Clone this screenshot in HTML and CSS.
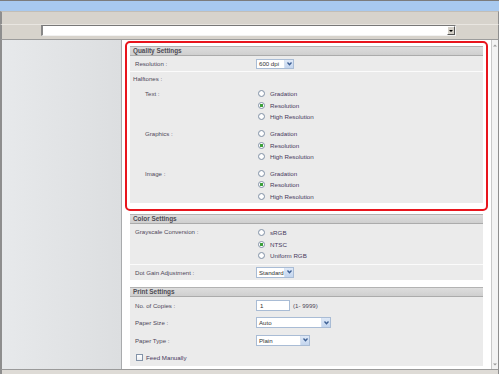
FILE: index.html
```html
<!DOCTYPE html>
<html>
<head>
<meta charset="utf-8">
<title>Settings</title>
<link rel="stylesheet" href="styles.css">
</head>
<body>
<div class="window">
  <div class="titlebar"></div>
  <div class="toolbar frame"></div>
  <div class="addrrow frame">
    <div class="combo"><span class="combo-btn"><i class="tri"></i></span></div>
  </div>
  <div class="main frame">
    <div class="sidebar"></div>
    <div class="content">
      <div class="highlight">
        <section class="panel">
          <div class="panel-head">Quality Settings</div>
          <div class="panel-body">
            <div class="row sep h16">
              <span class="label">Resolution :</span>
              <span class="select w38">600 dpi<span class="sel-btn"><svg width="7" height="6" viewBox="0 0 7 6"><polyline points="1.5,1.5 3.5,3.8 5.5,1.5" fill="none" stroke="#3d5f93" stroke-width="1.3"/></svg></span></span>
            </div>
            <div class="block">
              <div class="label title">Halftones :</div>
              <div class="group first">
                <span class="label sub">Text :</span>
                <div class="radios">
                  <div class="radio"><i class="rb"></i>Gradation</div>
                  <div class="radio"><i class="rb on"></i>Resolution</div>
                  <div class="radio"><i class="rb"></i>High Resolution</div>
                </div>
              </div>
              <div class="group">
                <span class="label sub">Graphics :</span>
                <div class="radios">
                  <div class="radio"><i class="rb"></i>Gradation</div>
                  <div class="radio"><i class="rb on"></i>Resolution</div>
                  <div class="radio"><i class="rb"></i>High Resolution</div>
                </div>
              </div>
              <div class="group">
                <span class="label sub">Image :</span>
                <div class="radios">
                  <div class="radio"><i class="rb"></i>Gradation</div>
                  <div class="radio"><i class="rb on"></i>Resolution</div>
                  <div class="radio"><i class="rb"></i>High Resolution</div>
                </div>
              </div>
            </div>
          </div>
        </section>
      </div>

      <section class="panel outer color">
        <div class="panel-head">Color Settings</div>
        <div class="panel-body">
          <div class="group gray sep">
            <span class="label">Grayscale Conversion :</span>
            <div class="radios">
              <div class="radio"><i class="rb"></i>sRGB</div>
              <div class="radio"><i class="rb on"></i>NTSC</div>
              <div class="radio"><i class="rb"></i>Uniform RGB</div>
            </div>
          </div>
          <div class="row h15">
            <span class="label">Dot Gain Adjustment :</span>
            <span class="select w38 h11">Standard<span class="sel-btn"><svg width="7" height="6" viewBox="0 0 7 6"><polyline points="1.5,1.5 3.5,3.8 5.5,1.5" fill="none" stroke="#3d5f93" stroke-width="1.3"/></svg></span></span>
          </div>
        </div>
      </section>

      <section class="panel outer print">
        <div class="panel-head">Print Settings</div>
        <div class="panel-body">
          <div class="row h17">
            <span class="label">No. of Copies :</span>
            <span class="input">1</span><span class="hint">(1- 9999)</span>
          </div>
          <div class="row h17">
            <span class="label">Paper Size :</span>
            <span class="select w75 h11">Auto<span class="sel-btn"><svg width="7" height="6" viewBox="0 0 7 6"><polyline points="1.5,1.5 3.5,3.8 5.5,1.5" fill="none" stroke="#3d5f93" stroke-width="1.3"/></svg></span></span>
          </div>
          <div class="row h17">
            <span class="label">Paper Type :</span>
            <span class="select w54 h11">Plain<span class="sel-btn"><svg width="7" height="6" viewBox="0 0 7 6"><polyline points="1.5,1.5 3.5,3.8 5.5,1.5" fill="none" stroke="#3d5f93" stroke-width="1.3"/></svg></span></span>
          </div>
          <div class="row h17 check">
            <i class="cb"></i><span class="cb-label">Feed Manually</span>
          </div>
        </div>
      </section>
    </div>
    <div class="scrollbar">
      <svg width="6" height="5" viewBox="0 0 6 5"><polygon points="1,3.5 3,1.5 5,3.5" fill="#9a9a9a"/></svg>
      <svg width="6" height="5" viewBox="0 0 6 5"><polygon points="1,1.5 3,3.5 5,1.5" fill="#9a9a9a"/></svg>
    </div>
  </div>
  <div class="bottom frame"></div>
</div>
</body>
</html>
```

FILE: styles.css
```css
* { box-sizing: border-box; margin: 0; padding: 0; }
html, body { width: 499px; height: 374px; overflow: hidden; }
body {
  font-family: "Liberation Sans", Arial, sans-serif;
  font-size: 6.1px;
  color: #4f4759;
  background: #fff;
}
.window {
  width: 499px;
  height: 374px;
  border-top: 1px solid #7c7c7c;
  display: flex;
  flex-direction: column;
}
.frame {
  border-left: 2px solid #8e8e8e;
  border-right: 1px solid #8e8e8e;
}
.titlebar { height: 10px; background: #a8c9ef; flex: none; }
.toolbar {
  height: 13px;
  flex: none;
  background: #d7d3cc;
  border-top: 1px solid #c2beb7;
}
.addrrow {
  height: 16px;
  flex: none;
  background: #d7d3cc;
  border-top: 1px solid #e9e6e1;
  border-bottom: 1px solid #9c9c9c;
}
.combo {
  margin-left: 39px;
  width: 415px;
  height: 11px;
  background: #fff;
  border-top: 1px solid #777;
  border-left: 2px solid #888;
  border-right: 1px solid #f2f2f2;
  border-bottom: 1px solid #f2f2f2;
  display: flex;
  justify-content: flex-end;
  align-items: center;
}
.combo-btn {
  width: 8px;
  height: 9px;
  background: #d4d0c8;
  border-top: 1px solid #fff;
  border-left: 1px solid #fff;
  border-right: 1px solid #555;
  border-bottom: 1px solid #555;
  display: flex;
  align-items: center;
  justify-content: center;
}
.tri {
  width: 0; height: 0;
  border-left: 2px solid transparent;
  border-right: 2px solid transparent;
  border-top: 2px solid #000;
}
.main {
  flex: 1;
  display: flex;
  min-height: 0;
}
.bottom {
  height: 5px;
  flex: none;
  background: #dedbd6;
  border-top: 1px solid #9a9a9a;
}
.sidebar {
  width: 120px;
  flex: none;
  background: linear-gradient(to right, #e7e9eb, #dcdee0);
  border-right: 1px solid #a9abad;
}
.content {
  flex: 1;
  overflow: hidden;
  background: #fff;
  padding-top: 1px;
}
.scrollbar {
  width: 7px;
  flex: none;
  background: #f3f3f3;
  border-left: 1px solid #c9c9c9;
  display: flex;
  flex-direction: column;
  justify-content: space-between;
  align-items: center;
  padding: 3px 0 2px;
}
.highlight {
  margin: 0 3px;
  border: 2px solid #e8151d;
  border-radius: 5px;
  padding: 3px 3px 6px;
}
.panel-head {
  height: 10px;
  background: linear-gradient(#dddddd, #cfcfcf);
  border-top: 1px solid #b3b3b3;
  border-bottom: 1px solid #ababab;
  font-weight: bold;
  font-size: 6.4px;
  line-height: 8px;
  color: #4e4c54;
  padding-left: 3px;
}
.panel-body { background: #ebebeb; }
.outer { margin: 0 8px; }
.color { margin-top: 3px; }
.print { margin-top: 7px; }
.row {
  display: flex;
  align-items: center;
}
.h16 { height: 16px; }
.h15 { height: 15px; }
.h17 { height: 17.3px; }
.sep { border-bottom: 1px solid #fbfbfb; }
.label {
  width: 126px;
  flex: none;
  padding-left: 5px;
  white-space: nowrap;
}
.block { padding-top: 1px; padding-bottom: 0.5px; }
.title { line-height: 12px; padding-left: 3px; }
.group { display: flex; margin-top: 5px; }
.group.first { margin-top: 3px; }
.group .label { line-height: 11.6px; }
.group .sub { padding-left: 15px; }
.group.gray { margin-top: 0; padding: 3px 0 2.2px; }
.group.gray .label { line-height: 10px; }
.radios { display: flex; flex-direction: column; }
.radio {
  height: 11.6px;
  display: flex;
  align-items: center;
  font-size: 6.2px;
  color: #47385c;
  white-space: nowrap;
}
.rb {
  width: 7px;
  height: 7px;
  margin-left: 2px;
  margin-right: 5px;
  border: 1px solid #8393a8;
  border-radius: 50%;
  background: radial-gradient(circle, #ffffff 40%, #e9ecef 100%);
  flex: none;
}
.rb.on {
  background: radial-gradient(circle, #3c9f3c 0 1.4px, #ffffff 1.9px);
}
.select {
  display: flex;
  align-items: center;
  justify-content: space-between;
  height: 10px;
  background: #fff;
  border: 1px solid #a9bcd5;
  padding-left: 2px;
  color: #333;
  white-space: nowrap;
}
.h11 { height: 11px; }
.w38 { width: 38px; }
.w75 { width: 75px; }
.w54 { width: 54px; }
.sel-btn {
  width: 9px;
  height: 100%;
  background: linear-gradient(#dfe9f7, #c3d5ee);
  border-left: 1px solid #d7e2f1;
  display: flex;
  align-items: center;
  justify-content: center;
}
.input {
  width: 34px;
  height: 11px;
  border: 1px solid #a9bcd5;
  background: #fff;
  color: #333;
  padding-left: 3px;
  line-height: 9px;
}
.hint { margin-left: 3px; }
.check { padding-left: 6px; }
.cb {
  width: 7px;
  height: 7px;
  border: 1px solid #8393a8;
  background: linear-gradient(#fff, #eceef1);
  flex: none;
}
.cb-label { margin-left: 3px; font-size: 6.2px; color: #47385c; }
```
